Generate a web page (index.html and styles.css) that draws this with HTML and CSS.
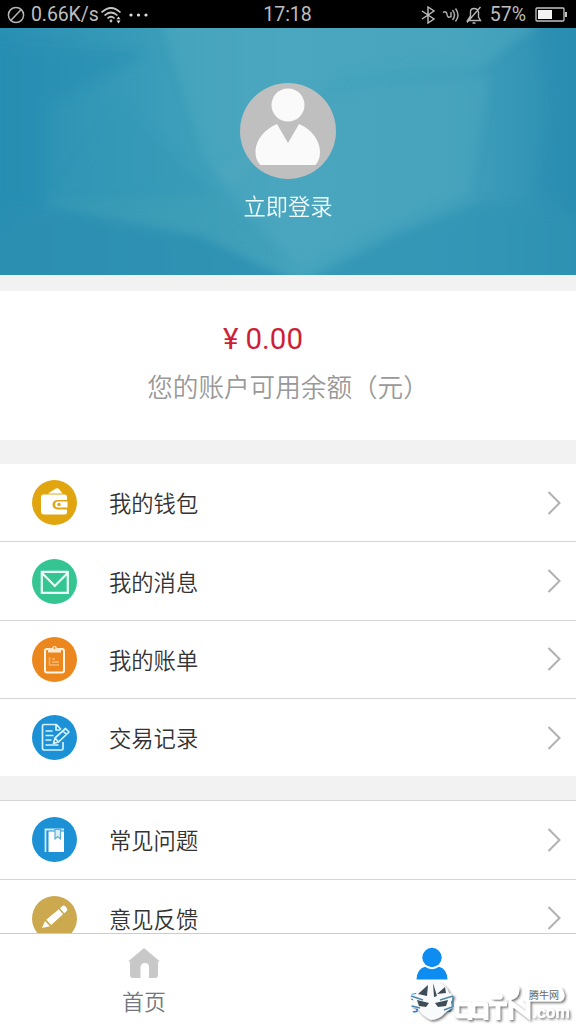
FILE: index.html
```html
<!DOCTYPE html>
<html lang="zh-CN">
<head>
<meta charset="utf-8">
<title>我的</title>
<link rel="stylesheet" href="styles.css">
</head>
<body>
<div class="app">
  <header class="status">
    <div class="status-left">
      <svg width="18" height="18" viewBox="0 0 18 18" fill="none" stroke="#b5b5b5" stroke-width="1.5"><circle cx="9" cy="9" r="7.6"/><path d="M3.8 14.4 14.2 3.6"/></svg>
      <span class="speed">0.66K/s</span>
      <svg width="22" height="18" viewBox="0 0 22 18" fill="none" stroke="#c4c4c4" stroke-width="1.7"><path d="M.5 6.500Q10-2.500 19.500 6.500M3.500 9.500Q10 3.500 16.500 9.500M6.500 12.500Q10 9 13.500 12.500"/><circle cx="10" cy="15" r="1.400" fill="#c4c4c4" stroke="none"/><path d="M15.500 13.200 17.500 10.400l2 2.800zM15.500 14.600l2 2.800 2-2.800z" fill="#ddd" stroke="none"/></svg>
      <svg class="dots" width="20" height="6" viewBox="0 0 20 6" fill="#ddd"><circle cx="2" cy="3" r="1.6"/><circle cx="9.500" cy="3" r="1.600"/><circle cx="17" cy="3" r="1.6"/></svg>
    </div>
    <span class="clock">17:18</span>
    <div class="status-right">
      <svg width="15" height="18" viewBox="0 0 15 18" fill="none" stroke="#bdbdbd" stroke-width="1.4"><path d="M1 5 13 13 7 17V1l6 4L1 13"/></svg>
      <svg width="18" height="16" viewBox="0 0 18 16" fill="none" stroke="#a9a9a9" stroke-width="1.5"><path d="M1 5.500q3.500-2 4 2t4 2V5M10.500 3q4 5 0 10M13.500 1.500q5 6.500 0 13"/></svg>
      <svg width="16" height="18" viewBox="0 0 16 18" fill="none" stroke="#b5b5b5" stroke-width="1.4"><path d="M1.500 14.500h13L12.500 11V6Q11.500 2.500 8 2.500T4.500 6v4zM6.500 17h3M1 16.500 14.500 1"/></svg>
      <span class="percent">57%</span>
      <svg width="33" height="16" viewBox="0 0 33 16"><rect x="1" y="1" width="28" height="13" rx="1" fill="none" stroke="#c4c4c4" stroke-width="1.300"/><path d="M3 3h14v9H3z" fill="#f2f2f2"/><path d="M30 5h2v5h-2z" fill="#c4c4c4"/></svg>
    </div>
  </header>

  <section class="hero">
    <svg class="hero-art" viewBox="0 0 576 247" preserveAspectRatio="none">
      <defs>
        <linearGradient id="sea" x1="0" x2="1"><stop offset="0" stop-color="#298fb3"/><stop offset=".3" stop-color="#3c9eba"/><stop offset=".5" stop-color="#46a4be"/><stop offset=".8" stop-color="#409fbb"/><stop offset="1" stop-color="#2b8eb2"/></linearGradient>
        <filter id="soft" x="-10%" y="-10%" width="120%" height="120%"><feGaussianBlur stdDeviation="5"/></filter>
      </defs>
      <path fill="url(#sea)" d="M0 0h576v247H0z"/>
      <g filter="url(#soft)">
        <path fill="#288cb1" opacity=".45" d="M-10 15 145 25 45 78 45 180-10 210z"/>
        <path fill="#3397b6" opacity=".5" d="M120 78 45 180 220 170z"/>
        <path fill="#50aac0" opacity=".5" d="M160-10 540-5 480 40 330 55 230 160 205 130z"/>
        <path fill="#4fa9bf" opacity=".45" d="M340 60 490 48 470 165 350 215 300 240 215 145z"/>
        <path fill="#3fa2ba" opacity=".3" d="M330 45 490 28 340 65z"/>
        <path fill="#3b9db6" opacity=".5" d="M45 175 215 162 300 242 180 205z"/>
        <path fill="#2b8fb2" opacity=".8" d="M-10 175 60 182 200 208 300 255-10 260z"/>
        <path fill="#2f93b4" opacity=".7" d="M300 255 400 205 480 175 590 185V260z"/>
        <path fill="#288cb1" opacity=".55" d="M535-10 590-10 590 200 540 160 552 80z"/>
      </g>
    </svg>
    <svg class="avatar" viewBox="0 0 96 96"><circle cx="48" cy="48" r="48" fill="#bfbfbf"/><g fill="#fafafa"><circle cx="48" cy="22" r="16.500"/><path d="M37 41 48 60 59 41C72 46 80 58 80 69Q80 77 75.500 82H20.500Q15 77 15.500 67C16.500 56 25 46 37 41z"/></g></svg>
    <span class="login">立即登录</span>
  </section>

  <section class="balance">
    <div class="amount"><span>¥</span><span>0.00</span></div>
    <div class="caption">您的账户可用余额（元）</div>
  </section>

  <main class="menu">
    <ul class="group">
      <li class="row">
        <svg class="icon" viewBox="0 0 45 45"><circle cx="22.500" cy="22.500" r="22.500" fill="#e1a60f"/><path fill="#fff" d="M16 13.500 23 9Q25 7.500 27 9l3.500 4.500zM9 17Q9 14.500 11.500 14.500H32.500Q35 14.500 35 17v3H26Q20.500 20 20.500 24.500T26 29.500H35v2.500Q35 34.500 32.500 34.500H12Q9 34.500 9 31.500z"/><path fill="#fff" d="M26 21.500h9.500v6H26a3 3 0 0 1 0-6z"/><circle cx="27" cy="24.500" r="1.700" fill="#e1a60f"/></svg>
        <span class="label">我的钱包</span>
        <svg class="chevron" viewBox="0 0 14 26"><path d="M1.500 2 12.500 13 1.500 24"/></svg>
      </li>
      <li class="row">
        <svg class="icon" viewBox="0 0 45 45"><circle cx="22.500" cy="22.500" r="22.500" fill="#35c593"/><path fill="none" stroke="#e9fff8" stroke-width="2.200" d="M9.800 12.800h26v21h-26zM10 14 22.800 27 35.600 14"/></svg>
        <span class="label">我的消息</span>
        <svg class="chevron" viewBox="0 0 14 26"><path d="M1.500 2 12.500 13 1.500 24"/></svg>
      </li>
      <li class="row">
        <svg class="icon" viewBox="0 0 45 45"><circle cx="22.500" cy="22.500" r="22.500" fill="#ec871e"/><rect x="13" y="12" width="19" height="23.500" rx="2" fill="none" stroke="#fff5e5" stroke-width="2"/><path fill="#ffe9cd" d="M16 11h4a2.600 2.600 0 0 1 5 0h4v4.500H16z"/><circle cx="22.500" cy="11" r="1" fill="#ec871e"/><path fill="none" stroke="#f8b873" stroke-width="1.400" d="M17.500 20v8H27M20 22h3M20 25h7"/></svg>
        <span class="label">我的账单</span>
        <svg class="chevron" viewBox="0 0 14 26"><path d="M1.500 2 12.500 13 1.500 24"/></svg>
      </li>
      <li class="row">
        <svg class="icon" viewBox="0 0 45 45"><circle cx="22.500" cy="22.500" r="22.500" fill="#1c91d5"/><g fill="none" stroke="#d5f3ff" stroke-width="1.700" stroke-linejoin="round"><path d="M29 14.500 24.500 9.500H12Q10.500 9.500 10.500 11V33.500Q10.500 35 12 35H29.500Q31 35 31 33.500V27M24 9.500V15h4M13.500 16h7M13.500 20.500h8M13.500 25h6M13.500 30h13"/><path d="M21.500 28.500 23 23 33.500 13.500 37 17 26.500 27zM31 16l3.500 3.500M23 23l3.500 4"/></g></svg>
        <span class="label">交易记录</span>
        <svg class="chevron" viewBox="0 0 14 26"><path d="M1.500 2 12.500 13 1.500 24"/></svg>
      </li>
    </ul>
    <ul class="group second">
      <li class="row">
        <svg class="icon" viewBox="0 0 45 45"><circle cx="22.500" cy="22.500" r="22.500" fill="#1c91d5"/><path d="M13.500 35V12.500H32" fill="none" stroke="#c7ecfc" stroke-width="1.800"/><path fill="#fff" d="M16.500 14.500H32V35H16.500z"/><path fill="#d9edf8" stroke="#5caed8" stroke-width="1.200" d="M23 12.500h5.500V22L25.700 19.500 23 22z"/></svg>
        <span class="label">常见问题</span>
        <svg class="chevron" viewBox="0 0 14 26"><path d="M1.500 2 12.500 13 1.500 24"/></svg>
      </li>
      <li class="row">
        <svg class="icon" viewBox="0 0 45 45"><circle cx="22.500" cy="22.500" r="22.500" fill="#cca84e"/><path fill="#fff" d="M10 32 13 25 18 30.200zM14.200 23.800 26.800 13.200 31 18.200 19.200 29zM28 12.200 30.500 10Q32 9 33.500 10.500L35 12.500Q36 14 34.500 15.200L32.200 17.200z"/></svg>
        <span class="label">意见反馈</span>
        <svg class="chevron" viewBox="0 0 14 26"><path d="M1.500 2 12.500 13 1.500 24"/></svg>
      </li>
    </ul>
  </main>

  <nav class="tabs">
    <div class="tab">
      <svg width="34" height="34" viewBox="0 0 34 34"><path fill="#c8c8c8" d="M17 2 33 15.500H31V29Q31 32 28 32H22V21Q22 17 18 17T13.500 21V32H6Q3 32 3 29V15.500H1z"/></svg>
      <span>首页</span>
    </div>
    <div class="tab active">
      <svg width="34" height="34" viewBox="0 0 34 34"><g fill="#0d8df2"><circle cx="17" cy="11.500" r="9.700"/><path d="M1.500 33.500Q2 23 10 20.800 17 25.500 24 20.800 32 23 32.500 33.500z"/></g></svg>
      <span>我的</span>
    </div>
    <svg class="watermark" width="170" height="50" viewBox="0 0 170 50">
      <defs><filter id="drop" filterUnits="userSpaceOnUse" x="0" y="0" width="170" height="50"><feDropShadow dx="1.500" dy="1.500" stdDeviation="1.300" flood-color="#333" flood-opacity=".7"/></filter></defs>
      <g filter="url(#drop)">
        <path fill="#f8fafb" d="M12 14Q19 6 28 8 40 9 43 19L48 22 45 28 46 34 40 38Q33 46 25 46 16 42 12 35L5 32 8 27 4 21 10 20z"/>
      </g>
      <path fill="#3d4c57" d="M12 20 22 11 21 22zM27 9l1 14 3-1zM31 20 39 13 40 19zM11 26l12 3-3 4-7-1zM42 26l-13 3 3 4 8-1z"/>
      <path fill="none" stroke="#4f88ad" stroke-width="1.500" d="M5 22l12 4M47 22 34 26M6 32l8 2M46 33 38 36M47 22v11"/>
      <g filter="url(#drop)" fill="none" stroke="#fff" stroke-width="4.500">
        <path d="M64 42H53Q51 42 51 40V32Q51 30 53 30H62Q64 30 64 32V46M80 42H69Q67 42 67 40V32Q67 30 69 30H78Q80 30 80 32V46M83 30h18M92 30v16M105 46V29L122 42V27"/>
        <path stroke-width="5" stroke-linecap="round" d="M88 23h6M103 24q8-1 8-9M120 25h34q4-2 0-9"/>
        <path fill="#fff" stroke="none" d="M120 14h36v12h-36z"/>
      </g>
      <text class="wm-com" x="126" y="44" textLength="38" lengthAdjust="spacingAndGlyphs" filter="url(#drop)">.com</text>
      <text class="wm-cn" x="123" y="25" textLength="30">腾牛网</text>
    </svg>
  </nav>
</div>
</body>
</html>
```
FILE: styles.css
```css
* { box-sizing: border-box; }
body { margin: 0; background: #fff; font-family: Roboto, "Noto Sans CJK SC", sans-serif; }
.app { width: 576px; height: 1024px; display: flex; flex-direction: column; overflow: hidden; }
.status { height: 28px; flex: none; display: grid; grid-template-columns: 1fr auto 1fr; align-items: center; padding: 1px 8px 0 7px; background: #000; color: #bdbdbd; font-size: 19.5px; line-height: 28px; }
.status-left, .status-right { display: flex; align-items: center; }
.status-right { justify-content: flex-end; gap: 6px; }
.speed { margin: 0 3px 0 6px; width: 67px; white-space: nowrap; letter-spacing: -0.1px; }
.dots { margin-left: 6px; }
.percent { margin: 0 3px 0 2px; }
.hero { position: relative; height: 247px; flex: none; display: flex; flex-direction: column; align-items: center; padding-top: 55px; overflow: hidden; }
.hero-art { position: absolute; inset: 0; width: 100%; height: 100%; }
.avatar { position: relative; width: 96px; height: 96px; }
.login { position: relative; margin-top: 12px; font-size: 22.3px; line-height: 32px; color: #eefcff; font-weight: 350; }
.balance { height: 165px; flex: none; border-top: 16px solid #f2f2f2; padding-top: 30px; background: #fff; }
.amount { display: flex; justify-content: center; gap: 7px; margin-right: 50px; height: 36px; line-height: 36px; font-size: 29.5px; color: #cf1f38; }
.caption { margin-top: 13px; text-align: center; font-size: 25.6px; line-height: 36px; color: #999; font-weight: 350; }
.menu { flex: 1; min-height: 0; overflow: hidden; background: #f2f2f2; padding-top: 24px; }
.group { list-style: none; margin: 0; padding: 0; background: #fff; }
.second { margin-top: 24px; border-top: 1px solid #d5d5d5; }
.row { height: 78.4px; display: flex; align-items: center; padding: 0 15px 0 32px; border-bottom: 1px solid #d5d5d5; }
.group:first-child .row:last-child { height: 77px; border-bottom: 0; }
.icon { width: 45px; height: 45px; flex: none; }
.label { flex: 1; margin-left: 32px; font-size: 22.3px; line-height: 32px; color: #333; font-weight: 350; padding-top: 3px; }
.chevron { width: 14px; height: 26px; fill: none; stroke: #b0b0b0; stroke-width: 2; }
.tabs { position: relative; height: 91px; flex: none; display: grid; grid-template-columns: 1fr 1fr; border-top: 1px solid #ccc; background: #fff; }
.tab { display: flex; flex-direction: column; align-items: center; padding-top: 12px; font-size: 22px; line-height: 32px; color: #74777d; font-weight: 350; }
.tab span { margin-top: 7px; }
.tab.active { color: #0d8df2; }
.watermark { position: absolute; right: 0; bottom: 0; }
.wm-com { font: 700 17px Roboto, sans-serif; fill: #fff; }
.wm-cn { font: 10px "Noto Sans CJK SC", sans-serif; fill: #666; }
```
